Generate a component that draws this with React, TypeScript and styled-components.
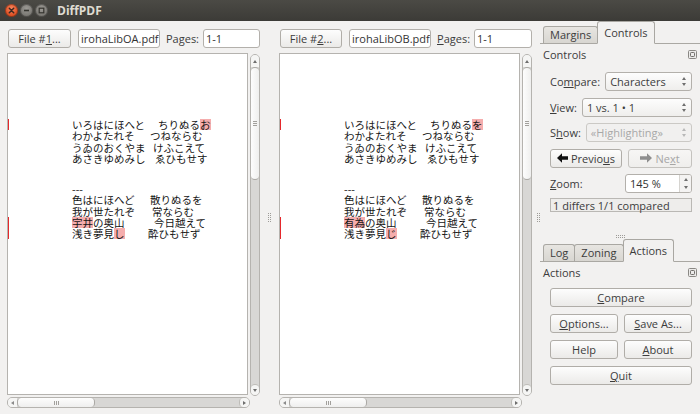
import React from 'react';
import styled, { createGlobalStyle } from 'styled-components';

const UI_FONT = `"Open Sans", "Noto Sans", sans-serif`;
const DOC_FONT = `"Noto Sans CJK JP", "Noto Sans", sans-serif`;

const GlobalStyle = createGlobalStyle`
  * { box-sizing: border-box; }
  html, body { margin: 0; padding: 0; }
  body {
    background: #f2f1f0;
    font-family: ${UI_FONT};
    font-size: 11px;
    color: #3c3c3c;
    overflow: hidden;
  }
`;

const Window = styled.div`
  width: 700px;
  height: 414px;
  display: flex;
  flex-direction: column;
  background: #f2f1f0;
  overflow: hidden;
`;

/* ---------- title bar ---------- */
const TitleBar = styled.div`
  flex: none;
  height: 21px;
  display: flex;
  align-items: center;
  gap: 2px;
  padding-left: 5px;
  background: linear-gradient(#4b4a45, #3c3b37);
`;

const WinButton = styled.div<{ $close?: boolean }>`
  width: 13px;
  height: 13px;
  border-radius: 50%;
  display: flex;
  align-items: center;
  justify-content: center;
  background: ${p =>
    p.$close
      ? 'radial-gradient(circle at 50% 35%, #f8865f, #e05327 60%, #b9421d)'
      : 'radial-gradient(circle at 50% 35%, #9c9a95, #7d7b76 60%, #5f5d59)'};
  box-shadow: inset 0 0 0 1px rgba(0, 0, 0, 0.3);
`;

const WindowTitle = styled.div`
  margin-left: 7px;
  font-family: ${UI_FONT};
  font-weight: 700;
  font-size: 12px;
  color: #dfdbd2;
`;

/* ---------- main ---------- */
const Main = styled.div`
  flex: 1;
  display: flex;
  min-height: 0;
`;

const PanesArea = styled.div`
  display: flex;
  padding-left: 7px;
`;

const Pane = styled.div`
  width: 253px;
  display: flex;
  flex-direction: column;
  padding-top: 8px;
`;

const Toolbar = styled.div`
  height: 19px;
  margin-bottom: 5px;
  padding-left: 1px;
  display: flex;
  align-items: center;
  gap: 6px;
`;

const PushButton = styled.button<{ $disabled?: boolean; $span?: boolean; $w?: number }>`
  height: 19px;
  margin: 0;
  padding: 0 4px;
  font-family: ${UI_FONT};
  font-size: 11px;
  line-height: 1;
  color: ${p => (p.$disabled ? '#a6a6a6' : '#3c3c3c')};
  border: 1px solid ${p => (p.$disabled ? '#c4c2be' : '#b0ada8')};
  border-radius: 3px;
  background: ${p =>
    p.$disabled ? 'linear-gradient(#f7f6f5, #efeeec)' : 'linear-gradient(#fdfdfd, #ebeae8)'};
  display: flex;
  align-items: center;
  justify-content: center;
  gap: 3px;
  white-space: nowrap;
  ${p => (p.$span ? 'grid-column: span 2;' : '')}
  ${p => (p.$w ? `flex: 0 0 ${p.$w}px;` : '')}
`;

const TextField = styled.div<{ $w?: number }>`
  height: 19px;
  border: 1px solid #b3b0ab;
  border-radius: 3px;
  background: #fff;
  padding: 0 2px;
  display: flex;
  align-items: center;
  color: #333;
  white-space: nowrap;
  overflow: hidden;
  ${p => (p.$w ? `flex: 0 0 ${p.$w}px; margin-left: 1px;` : 'flex: 1;')}
`;

const Label = styled.span<{ $tight?: boolean }>`
  color: #3c3c3c;
  white-space: nowrap;
  ${p => (p.$tight ? 'margin-right: -2px;' : '')}
`;

const Key = styled.u`
  text-decoration: underline;
  text-underline-offset: 1px;
`;

const Viewer = styled.div`
  display: grid;
  grid-template-columns: 241px 10px;
  grid-template-rows: 342px 11px;
  column-gap: 2px;
  row-gap: 2px;
`;

const Page = styled.div`
  grid-column: 1;
  grid-row: 1;
  border: 1px solid #b5b3af;
  background: #fff;
  padding-top: 65px;
  overflow: hidden;
`;

const DocLine = styled.div<{ $diff?: boolean; $gapBefore?: boolean }>`
  position: relative;
  height: 11.3px;
  line-height: 11.3px;
  padding-left: 64px;
  white-space: nowrap;
  font-family: ${DOC_FONT};
  font-size: 10.5px;
  color: #151515;
  ${p => (p.$gapBefore ? 'margin-top: 18.8px;' : '')}
  &::before {
    content: '';
    display: ${p => (p.$diff ? 'block' : 'none')};
    position: absolute;
    left: -1px;
    top: 0;
    bottom: 0;
    width: 2px;
    background: #e5282c;
  }
`;

const Col = styled.span<{ $w: number }>`
  display: inline-block;
  width: ${p => p.$w}px;
`;

const Mark = styled.span`
  display: inline-block;
  height: 11.3px;
  background: #f5adad;
`;

/* ---------- scrollbars ---------- */
const VScroll = styled.div`
  grid-column: 2;
  grid-row: 1;
  align-self: start;
  margin-top: 1px;
  height: 342px;
  border: 1px solid #b5b3af;
  border-radius: 5px;
  background: #d8d7d5;
  display: flex;
  flex-direction: column;
  overflow: hidden;
`;

const HScroll = styled.div`
  grid-column: 1;
  grid-row: 2;
  margin-right: -2px;
  height: 11px;
  border: 1px solid #b5b3af;
  border-radius: 5px;
  background: #d8d7d5;
  display: flex;
  overflow: hidden;
`;

const Cap = styled.div<{ $vertical?: boolean; $end?: boolean }>`
  flex: none;
  ${p => (p.$vertical ? 'height: 12px;' : 'width: 9px;')}
  background: #f5f5f4;
  display: flex;
  align-items: center;
  justify-content: center;
  ${p =>
    p.$end
      ? p.$vertical
        ? 'border-top: 1px solid #bdbbb7; border-radius: 4px 4px 0 0; height: 11px;'
        : 'border-left: 1px solid #bdbbb7; border-radius: 4px 0 0 4px; width: 10px;'
      : ''}
`;

const Thumb = styled.div<{ $vertical?: boolean }>`
  flex: none;
  ${p =>
    p.$vertical
      ? 'height: 113px; border-top: 1px solid #aaa8a4; border-bottom: 1px solid #aaa8a4; background: linear-gradient(to right, #fdfdfd, #efefee);'
      : 'width: 78px; border-left: 1px solid #aaa8a4; border-right: 1px solid #aaa8a4; background: linear-gradient(#fdfdfd, #efefee);'}
  border-radius: 4px;
  display: flex;
  align-items: center;
  justify-content: center;
`;

const ThumbGrip = styled.div<{ $vertical?: boolean }>`
  ${p =>
    p.$vertical
      ? 'width: 4px; height: 5px; background: repeating-linear-gradient(to bottom, #a2a09c 0 1px, transparent 1px 2px);'
      : 'width: 5px; height: 4px; background: repeating-linear-gradient(to right, #a2a09c 0 1px, transparent 1px 2px);'}
`;

const Track = styled.div`
  flex: 1;
`;

type Dir = 'up' | 'down' | 'left' | 'right';

const Tri = styled.span<{ $dir: Dir; $c?: string }>`
  display: block;
  width: 0;
  height: 0;
  border-style: solid;
  ${p => {
    const c = p.$c || '#6e6e6e';
    switch (p.$dir) {
      case 'up':
        return `border-width: 0 2px 3px 2px; border-color: transparent transparent ${c} transparent;`;
      case 'down':
        return `border-width: 3px 2px 0 2px; border-color: ${c} transparent transparent transparent;`;
      case 'left':
        return `border-width: 2px 3px 2px 0; border-color: transparent ${c} transparent transparent;`;
      default:
        return `border-width: 2px 0 2px 3px; border-color: transparent transparent transparent ${c};`;
    }
  }}
`;

/* ---------- splitters ---------- */
const Splitter = styled.div<{ $w: number; $end?: boolean }>`
  flex: none;
  width: ${p => p.$w}px;
  display: flex;
  align-items: center;
  justify-content: ${p => (p.$end ? 'flex-end' : 'center')};
`;

const Grip = styled.div<{ $horizontal?: boolean }>`
  ${p =>
    p.$horizontal
      ? 'width: 9px; height: 3px; border-top: 1px dotted #9d9b97; border-bottom: 1px dotted #9d9b97;'
      : 'width: 3px; height: 9px; border-left: 1px dotted #9d9b97; border-right: 1px dotted #9d9b97;'}
`;

const HSplitter = styled.div`
  flex: none;
  height: 8px;
  display: flex;
  align-items: flex-end;
  justify-content: center;
  padding-bottom: 1px;
`;

/* ---------- dock ---------- */
const Dock = styled.div`
  width: 160px;
  display: flex;
  flex-direction: column;
`;

const DockSection = styled.div<{ $h?: number }>`
  display: flex;
  flex-direction: column;
  ${p => (p.$h ? `flex: 0 0 ${p.$h}px;` : 'flex: 1;')}
`;

const TabBar = styled.div`
  flex: none;
  height: 23px;
  display: flex;
  align-items: flex-end;
  padding-left: 3px;
  border-bottom: 1px solid #aaa8a3;
`;

const Tab = styled.div<{ $active?: boolean }>`
  position: relative;
  height: ${p => (p.$active ? 23 : 18)}px;
  margin-bottom: -1px;
  padding: 0 6px ${p => (p.$active ? 0 : 1)}px;
  display: flex;
  align-items: center;
  border: 1px solid #a9a7a2;
  border-bottom-color: ${p => (p.$active ? '#f2f1f0' : '#aaa8a3')};
  border-radius: 3px 3px 0 0;
  background: ${p => (p.$active ? '#f2f1f0' : 'linear-gradient(#e7e5e1, #d8d6d1)')};
  color: #3c3c3c;
  white-space: nowrap;
  z-index: ${p => (p.$active ? 1 : 0)};
  & + & {
    margin-left: -1px;
  }
`;

const DockTitle = styled.div`
  flex: none;
  height: 21px;
  padding: 0 3px;
  display: flex;
  align-items: center;
  justify-content: space-between;
  color: #3c3c3c;
`;

const Form = styled.div`
  display: flex;
  flex-direction: column;
  gap: 6.5px;
  padding: 7px 8px 0 10px;
`;

const FormRow = styled.div`
  height: 19px;
  display: flex;
  align-items: center;
  gap: 5px;
`;

const Spacer = styled.div`
  flex: 1;
`;

const Combo = styled.div<{ $disabled?: boolean }>`
  flex: 1;
  height: 19px;
  border: 1px solid ${p => (p.$disabled ? '#cbc9c5' : '#b3b0ab')};
  border-radius: 3px;
  background: ${p => (p.$disabled ? '#f1f0ef' : 'linear-gradient(#fdfdfd, #efeeec)')};
  color: ${p => (p.$disabled ? '#a8a8a8' : '#3c3c3c')};
  padding: 0 5px 0 4px;
  display: flex;
  align-items: center;
  justify-content: space-between;
  white-space: nowrap;
`;

const ArrowStack = styled.div`
  display: flex;
  flex-direction: column;
  gap: 3px;
`;

const SpinBox = styled.div`
  flex: 0 0 67px;
  height: 19px;
  border: 1px solid #b3b0ab;
  border-radius: 3px;
  background: #fff;
  display: flex;
  overflow: hidden;
`;

const SpinText = styled.div`
  flex: 1;
  padding-left: 4px;
  display: flex;
  align-items: center;
  color: #333;
`;

const SpinButtons = styled.div`
  flex: 0 0 12px;
  border-left: 1px solid #d6d4d0;
  background: #f4f3f2;
  display: flex;
  flex-direction: column;
`;

const SpinHalf = styled.div`
  flex: 1;
  display: flex;
  align-items: center;
  justify-content: center;
`;

const ButtonRow = styled.div`
  height: 19px;
  display: flex;
  gap: 6px;
`;

const Status = styled.div`
  height: 14px;
  margin-top: -1.5px;
  border: 1px solid #bab8b4;
  background: #eeedeb;
  padding-left: 2px;
  display: flex;
  align-items: center;
  color: #3c3c3c;
  white-space: nowrap;
`;

const ActionsGrid = styled.div`
  display: grid;
  grid-template-columns: 1fr 1fr;
  grid-auto-rows: 19px;
  column-gap: 6px;
  row-gap: 7px;
  padding: 5px 8px 0 10px;
`;

/* ---------- icons ---------- */
const CloseGlyph = () => (
  <svg width="13" height="13" viewBox="0 0 13 13">
    <path d="M4.3 4.3 L8.7 8.7 M8.7 4.3 L4.3 8.7" stroke="#3b2a22" strokeWidth="1.5" strokeLinecap="round" />
  </svg>
);
const MinGlyph = () => (
  <svg width="13" height="13" viewBox="0 0 13 13">
    <path d="M4 6.5 L9 6.5" stroke="#35342f" strokeWidth="1.6" />
  </svg>
);
const MaxGlyph = () => (
  <svg width="13" height="13" viewBox="0 0 13 13">
    <rect x="4.2" y="4.2" width="4.6" height="4.6" fill="none" stroke="#35342f" strokeWidth="1.2" />
  </svg>
);

const FloatIcon = () => (
  <svg width="9" height="9" viewBox="0 0 9 9">
    <rect x="0.5" y="0.5" width="8" height="8" rx="1" fill="#ecebea" stroke="#8a8884" />
    <rect x="2.5" y="2.5" width="4" height="4" rx="0.8" fill="none" stroke="#6f6d69" />
  </svg>
);

const LeftArrow = ({ color }: { color: string }) => (
  <svg width="11" height="10" viewBox="0 0 11 10">
    <path d="M0 5 L5 0.3 L5 3.2 L11 3.2 L11 6.8 L5 6.8 L5 9.7 Z" fill={color} />
  </svg>
);
const RightArrow = ({ color }: { color: string }) => (
  <svg width="12" height="10" viewBox="0 0 12 10">
    <path d="M12 5 L7 0.3 L7 3.2 L0 3.2 L0 6.8 L7 6.8 L7 9.7 Z" fill={color} />
  </svg>
);

/* ---------- data ---------- */
type Seg = { t: string; hl?: boolean };
type Line = { a: Seg[]; w: number; b: Seg[]; diff?: boolean };

const s = (t: string, hl?: boolean): Seg => ({ t, hl });

const block1 = (last: string): Line[] => [
  { a: [s('いろはにほへと')], w: 86, b: [s('ちりぬる'), s(last, true)], diff: true },
  { a: [s('わかよたれそ')], w: 78, b: [s('つねならむ')] },
  { a: [s('うゐのおくやま')], w: 81, b: [s('けふこえて')] },
  { a: [s('あさきゆめみし')], w: 83, b: [s('ゑひもせす')] },
];

const block2 = (word: string, end: string): Line[] => [
  { a: [s('色はにほへど')], w: 78, b: [s('散りぬるを')] },
  { a: [s('我が世たれぞ')], w: 80, b: [s('常ならむ')] },
  { a: [s(word, true), s('の奥山')], w: 82, b: [s('今日越えて')], diff: true },
  { a: [s('浅き夢見'), s(end, true)], w: 76, b: [s('酔ひもせず')], diff: true },
];

const Segs = ({ segs }: { segs: Seg[] }) => (
  <>
    {segs.map((g, i) => (g.hl ? <Mark key={i}>{g.t}</Mark> : <React.Fragment key={i}>{g.t}</React.Fragment>))}
  </>
);

const DocLines = ({ lines }: { lines: Line[] }) => (
  <>
    {lines.map((l, i) => (
      <DocLine key={i} $diff={l.diff}>
        <Col $w={l.w}>
          <Segs segs={l.a} />
        </Col>
        <Segs segs={l.b} />
      </DocLine>
    ))}
  </>
);

const PageView = ({ first, second }: { first: Line[]; second: Line[] }) => (
  <Viewer>
    <Page>
      <DocLines lines={first} />
      <DocLine $gapBefore>---</DocLine>
      <DocLines lines={second} />
    </Page>
    <VScroll>
      <Cap $vertical>
        <Tri $dir="up" />
      </Cap>
      <Thumb $vertical>
        <ThumbGrip $vertical />
      </Thumb>
      <Track />
      <Cap $vertical $end>
        <Tri $dir="down" />
      </Cap>
    </VScroll>
    <HScroll>
      <Cap>
        <Tri $dir="left" $c="#8a8a8a" />
      </Cap>
      <Thumb>
        <ThumbGrip />
      </Thumb>
      <Track />
      <Cap $end>
        <Tri $dir="right" />
      </Cap>
    </HScroll>
  </Viewer>
);

const ComboArrows = ({ c }: { c?: string }) => (
  <ArrowStack>
    <Tri $dir="up" $c={c} />
    <Tri $dir="down" $c={c} />
  </ArrowStack>
);

export default function App() {
  return (
    <>
      <GlobalStyle />
      <Window>
        <TitleBar>
          <WinButton $close>
            <CloseGlyph />
          </WinButton>
          <WinButton>
            <MinGlyph />
          </WinButton>
          <WinButton>
            <MaxGlyph />
          </WinButton>
          <WindowTitle>DiffPDF</WindowTitle>
        </TitleBar>
        <Main>
          <PanesArea>
            <Pane>
              <Toolbar>
                <PushButton $w={63}>
                  <span>
                    File #<Key>1</Key>...
                  </span>
                </PushButton>
                <TextField $w={82}>irohaLibOA.pdf</TextField>
                <Label $tight>Pages:</Label>
                <TextField>1-1</TextField>
              </Toolbar>
              <PageView first={block1('お')} second={block2('宇井', 'し')} />
            </Pane>
            <Splitter $w={19}>
              <Grip />
            </Splitter>
            <Pane>
              <Toolbar>
                <PushButton $w={62}>
                  <span>
                    File #<Key>2</Key>...
                  </span>
                </PushButton>
                <TextField $w={82}>irohaLibOB.pdf</TextField>
                <Label $tight>
                  <Key>P</Key>ages:
                </Label>
                <TextField>1-1</TextField>
              </Toolbar>
              <PageView first={block1('を')} second={block2('有為', 'じ')} />
            </Pane>
          </PanesArea>
          <Splitter $w={8} $end>
            <Grip />
          </Splitter>
          <Dock>
            <DockSection $h={210}>
              <TabBar>
                <Tab>Margins</Tab>
                <Tab $active>Controls</Tab>
              </TabBar>
              <DockTitle>
                <span>Controls</span>
                <FloatIcon />
              </DockTitle>
              <Form>
                <FormRow>
                  <Label>
                    Co<Key>m</Key>pare:
                  </Label>
                  <Combo>
                    <span>Characters</span>
                    <ComboArrows />
                  </Combo>
                </FormRow>
                <FormRow>
                  <Label>
                    <Key>V</Key>iew:
                  </Label>
                  <Combo>
                    <span>1 vs. 1 • 1</span>
                    <ComboArrows />
                  </Combo>
                </FormRow>
                <FormRow>
                  <Label>
                    S<Key>h</Key>ow:
                  </Label>
                  <Combo $disabled>
                    <span>«Highlighting»</span>
                    <ComboArrows c="#b8b8b8" />
                  </Combo>
                </FormRow>
                <ButtonRow>
                  <PushButton $w={72}>
                    <LeftArrow color="#111" />
                    <span>
                      Previo<Key>u</Key>s
                    </span>
                  </PushButton>
                  <PushButton $disabled style={{ flex: 1 }}>
                    <RightArrow color="#8e8e8e" />
                    <span>
                      Ne<Key>x</Key>t
                    </span>
                  </PushButton>
                </ButtonRow>
                <FormRow>
                  <Label>
                    <Key>Z</Key>oom:
                  </Label>
                  <Spacer />
                  <SpinBox>
                    <SpinText>145 %</SpinText>
                    <SpinButtons>
                      <SpinHalf>
                        <Tri $dir="up" />
                      </SpinHalf>
                      <SpinHalf>
                        <Tri $dir="down" />
                      </SpinHalf>
                    </SpinButtons>
                  </SpinBox>
                </FormRow>
                <Status>1 differs 1/1 compared</Status>
              </Form>
            </DockSection>
            <HSplitter>
              <Grip $horizontal />
            </HSplitter>
            <DockSection>
              <TabBar>
                <Tab>Log</Tab>
                <Tab>Zoning</Tab>
                <Tab $active>Actions</Tab>
              </TabBar>
              <DockTitle>
                <span>Actions</span>
                <FloatIcon />
              </DockTitle>
              <ActionsGrid>
                <PushButton $span>
                  <span>
                    <Key>C</Key>ompare
                  </span>
                </PushButton>
                <PushButton>
                  <span>
                    <Key>O</Key>ptions...
                  </span>
                </PushButton>
                <PushButton>
                  <span>
                    <Key>S</Key>ave As...
                  </span>
                </PushButton>
                <PushButton>Help</PushButton>
                <PushButton>
                  <span>
                    <Key>A</Key>bout
                  </span>
                </PushButton>
                <PushButton $span>
                  <span>
                    <Key>Q</Key>uit
                  </span>
                </PushButton>
              </ActionsGrid>
            </DockSection>
          </Dock>
        </Main>
      </Window>
    </>
  );
}
